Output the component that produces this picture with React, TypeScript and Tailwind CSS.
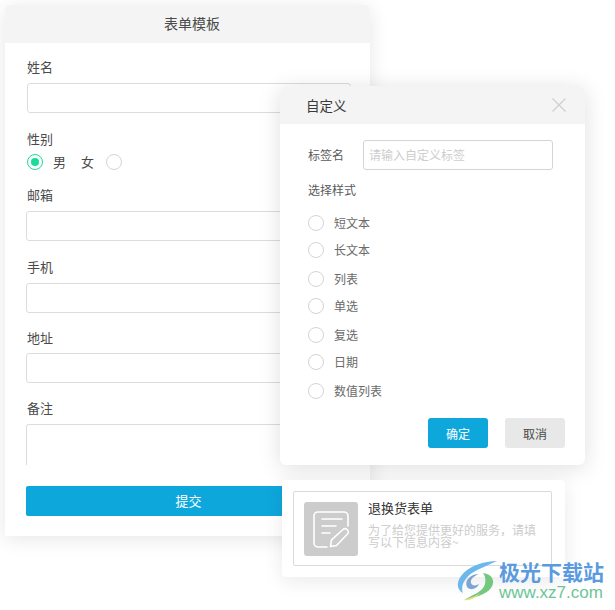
const font = "font-['Noto_Sans_CJK_SC','Noto_Sans',sans-serif]"

const styles = [
  { name: "短文本", gap: "" },
  { name: "长文本", gap: "mt-[11px]" },
  { name: "列表", gap: "mt-[13px]" },
  { name: "单选", gap: "mt-[11px]" },
  { name: "复选", gap: "mt-[13px]" },
  { name: "日期", gap: "mt-[11px]" },
  { name: "数值列表", gap: "mt-[13px]" },
]

function Radio({ checked = false }: { checked?: boolean }) {
  return (
    <span
      className={`flex h-4 w-4 shrink-0 items-center justify-center rounded-full border bg-white ${
        checked ? "border-[#19dc97]" : "border-[#d4d4d4]"
      }`}
    >
      {checked && <span className="h-2 w-2 rounded-full bg-[#19dc97]" />}
    </span>
  )
}

function Label({ text }: { text: string }) {
  return <div className="ml-[1px] h-5 pt-[1px] text-[13px] leading-[18px] text-[#4a4a4a]">{text}</div>
}

function Field({ label, top, box = "mt-[6px] w-[325px]" }: { label: string; top: string; box?: string }) {
  return (
    <div className={top}>
      <Label text={label} />
      <div className={`h-[30px] rounded-[3px] border border-[#dcdcdc] bg-white ${box}`} />
    </div>
  )
}

function FormCard() {
  return (
    <div className="ml-[5px] w-[365px] overflow-hidden rounded-t-[5px] bg-white shadow-[0_3px_20px_rgba(0,0,0,0.1)]">
      <div className="flex h-[38px] items-center justify-center bg-[#f4f4f4] pb-[3px] pl-[9px] text-sm text-[#4a4a4a]">
        表单模板
      </div>
      <div className="px-[21px] pb-5 pt-[14px]">
        <Field label="姓名" top="" box="ml-[1px] mt-[6px] w-[324px]" />
        <div className="mt-4">
          <Label text="性别" />
          <div className="ml-[1px] mt-[5px] flex h-4 items-center text-[13px] text-[#4a4a4a]">
            <Radio checked />
            <span className="ml-[10px]">男</span>
            <span className="ml-[15px]">女</span>
            <span className="ml-3">
              <Radio />
            </span>
          </div>
        </div>
        <Field label="邮箱" top="mt-[15px]" />
        <Field label="手机" top="mt-4" />
        <Field label="地址" top="mt-[15px]" box="mt-[5px] w-[325px]" />
        <div className="mt-[15px]">
          <Label text="备注" />
          <div className="mt-[6px] h-[41px] w-[325px] rounded-t-[3px] border border-b-0 border-[#dcdcdc]" />
        </div>
        <button
          type="button"
          className="mt-[21px] block h-[30px] w-[325px] rounded-[2px] bg-[#0ea7dc] text-[13px] text-white"
        >
          提交
        </button>
      </div>
    </div>
  )
}

function CustomDialog() {
  return (
    <div className="absolute left-[280px] top-[86px] w-[305px] overflow-hidden rounded-[6px] bg-white shadow-[0_3px_22px_rgba(0,0,0,0.13)]">
      <div className="flex h-[38px] items-center justify-between bg-[#f4f4f4] pl-[26px] pr-[19px]">
        <span className="pt-[1px] text-[13.5px] text-[#3a3a3a]">自定义</span>
        <svg width="14" height="14" viewBox="0 0 14 14" fill="none" stroke="#cfcfcf" strokeWidth="1.2">
          <path d="M0.5 0.5L13.5 13.5M13.5 0.5L0.5 13.5" />
        </svg>
      </div>
      <div className="pl-7 pr-5 pt-4">
        <div className="flex h-[30px] items-center">
          <span className="w-[55px] text-xs text-[#5a5a5a]">标签名</span>
          <div className="flex h-[30px] w-[190px] items-center rounded-[3px] border border-[#d4d4d4] pl-[5px] text-xs text-[#cdcdcd]">
            请输入自定义标签
          </div>
        </div>
        <div className="mt-[10px] h-5 text-xs leading-5 text-[#5a5a5a]">选择样式</div>
        <div className="mt-[15px]">
          {styles.map((s) => (
            <div key={s.name} className={`flex h-4 items-center ${s.gap}`}>
              <Radio />
              <span className="ml-[10px] pb-[1px] text-xs text-[#6a6a6a]">{s.name}</span>
            </div>
          ))}
        </div>
        <div className="mt-[19px] flex justify-end gap-[17px] pb-[17px]">
          <button type="button" className="h-[30px] w-[60px] rounded-[3px] bg-[#0ea7dc] pt-[1px] text-xs text-white">
            确定
          </button>
          <button type="button" className="h-[30px] w-[60px] rounded-[3px] bg-[#e8e8e8] pt-[1px] text-xs text-[#4a4a4a]">
            取消
          </button>
        </div>
      </div>
    </div>
  )
}

function TemplateCard() {
  return (
    <div className="absolute left-[282px] top-[480px] h-[97px] w-[283px] rounded-[4px] bg-white p-[11px] shadow-[0_4px_20px_rgba(0,0,0,0.09)]">
      <div className="flex h-[75px] w-[259px] items-start rounded-[2px] border border-[#dadada] pl-[10px]">
        <div className="mt-[10px] h-[54px] w-[54px] shrink-0 rounded-[3px] bg-[#cccccc]">
          <svg width="54" height="54" viewBox="0 0 54 54" fill="none" stroke="#fff" strokeWidth="1.6" strokeLinecap="round">
            <path d="M44 24V14a4 4 0 0 0-4-4H14a4 4 0 0 0-4 4v27a4 4 0 0 0 4 4h9" />
            <path d="M18 17h20M18 24h14M18 31h8" />
            <path d="M26.500 44.500l1-6.500L39 27.500a2.800 2.800 0 0 1 4 0l.5.5a2.800 2.800 0 0 1 0 4L32.500 43.500z" />
          </svg>
        </div>
        <div className="ml-[10px] w-[170px] pt-2">
          <div className="text-[13px] leading-4 text-[#333]">退换货表单</div>
          <div className="mt-2 text-xs leading-3 text-[#cccccc]">为了给您提供更好的服务，请填写以下信息内容~</div>
        </div>
      </div>
    </div>
  )
}

function Watermark() {
  return (
    <div className="absolute left-[457px] top-[558px] flex items-start">
      <svg width="43" height="43" viewBox="0 0 43 43" className="mt-[2px] shrink-0">
        <path d="M40 1C28 1 11 6 4 16C-1 23 0 30 6 33C3 26 8 18 15 13C23 8 32 5 40 1Z" fill="#6cb8ec" />
        <path d="M10 27C7 20 14 14 22 14C17 16 13 19 14 23C15 26 19 26 22 24C20 29 13 31 10 27Z" fill="#7ba6d2" />
        <path d="M26 13C35 14 39 21 34 28C28 36 16 37 7 40C15 35 26 32 28 24C29 19 28 16 26 13Z" fill="#74c77f" />
        <path d="M23 33C18 37 12 38 7 40C13 41 19 38 23 33Z" fill="#e8e37c" />
      </svg>
      <div className="-ml-[1px] pt-[1px]">
        <div className="h-6 text-[21px] font-bold leading-6 text-[#5a9be0]">极光下载站</div>
        <div className="h-5 font-['Liberation_Sans',sans-serif] text-[17px] leading-5 text-[#6cc596]">www.xz7.com</div>
      </div>
    </div>
  )
}

export default function App() {
  return (
    <div className={`relative h-[610px] w-[615px] overflow-hidden bg-white pt-[5px] ${font}`}>
      <FormCard />
      <CustomDialog />
      <TemplateCard />
      <Watermark />
    </div>
  )
}
